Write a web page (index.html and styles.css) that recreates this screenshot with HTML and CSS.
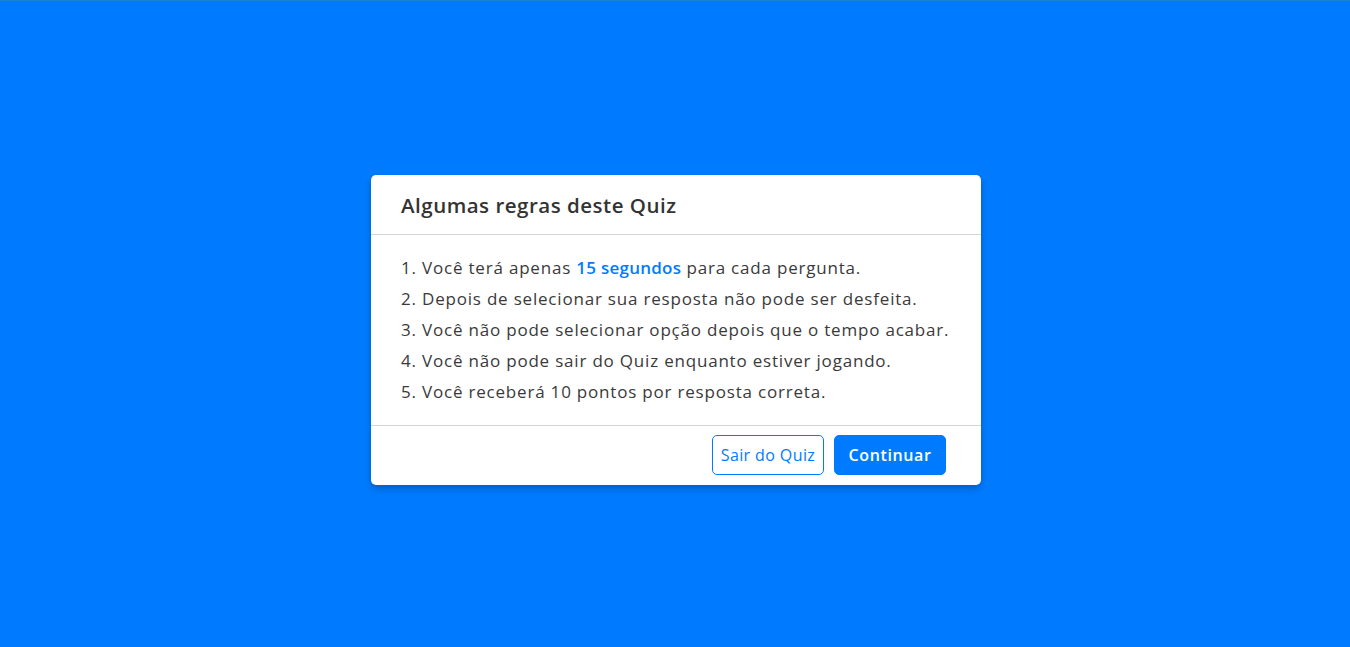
FILE: index.html
```html
<!DOCTYPE html>
<html lang="pt-BR">
<head>
<meta charset="utf-8">
<title>Quiz</title>
<link rel="stylesheet" href="styles.css">
</head>
<body>
<div class="page">
  <div class="info-box">
    <div class="info-title"><span>Algumas regras deste Quiz</span></div>
    <div class="info-list">
      <div class="info">1. Você terá apenas <span class="hl">15 segundos</span> para cada pergunta.</div>
      <div class="info">2. Depois de selecionar sua resposta não pode ser desfeita.</div>
      <div class="info">3. Você não pode selecionar opção depois que o tempo acabar.</div>
      <div class="info">4. Você não pode sair do Quiz enquanto estiver jogando.</div>
      <div class="info">5. Você receberá 10 pontos por resposta correta.</div>
    </div>
    <div class="buttons">
      <button class="btn quit">Sair do Quiz</button>
      <button class="btn restart">Continuar</button>
    </div>
  </div>
</div>
</body>
</html>
```
FILE: styles.css
```css
* { box-sizing: border-box; margin: 0; padding: 0; }
html, body { height: 100%; }
body {
  background: #007bff;
  font-family: "Open Sans", "Noto Sans", sans-serif;
  border-top: 1px solid #1f7fd0;
}
.page {
  height: 646px;
  display: flex;
  align-items: center;
  justify-content: center;
}
.info-box {
  width: 610px;
  background: #fff;
  border-radius: 5px;
  box-shadow: 0 4px 8px rgba(0,0,0,0.18), 0 2px 4px rgba(0,0,0,0.08);
  margin-top: 12px;
  margin-left: 2px;
}
.info-title {
  height: 60px;
  border-bottom: 1px solid #d4d4d4;
  padding: 0 30px;
  display: flex;
  align-items: center;
  font-size: 20.5px;
  font-weight: 600;
  letter-spacing: 0.5px;
  color: #333;
}
.info-list {
  padding: 17px 30px 18px;
  border-bottom: 1px solid #d4d4d4;
}
.info {
  font-size: 17px;
  line-height: 31px;
  color: #3a3a3a;
  letter-spacing: 0.8px;
}
.hl { color: #007bff; font-weight: 600; letter-spacing: 0.25px; }
.buttons {
  height: 59px;
  display: flex;
  align-items: flex-start;
  justify-content: flex-end;
  gap: 10px;
  padding: 9px 35px 0 30px;
}
.btn {
  width: 112px;
  height: 40px;
  border-radius: 5px;
  font-family: inherit;
  font-size: 16px;
  font-weight: 500;
  letter-spacing: 0.4px;
  cursor: pointer;
  border: 1px solid #007bff;
}
.quit { background: #fff; color: #007bff; }
.restart { background: #007bff; color: #fff; font-weight: 600; letter-spacing: 0.6px; }
```
